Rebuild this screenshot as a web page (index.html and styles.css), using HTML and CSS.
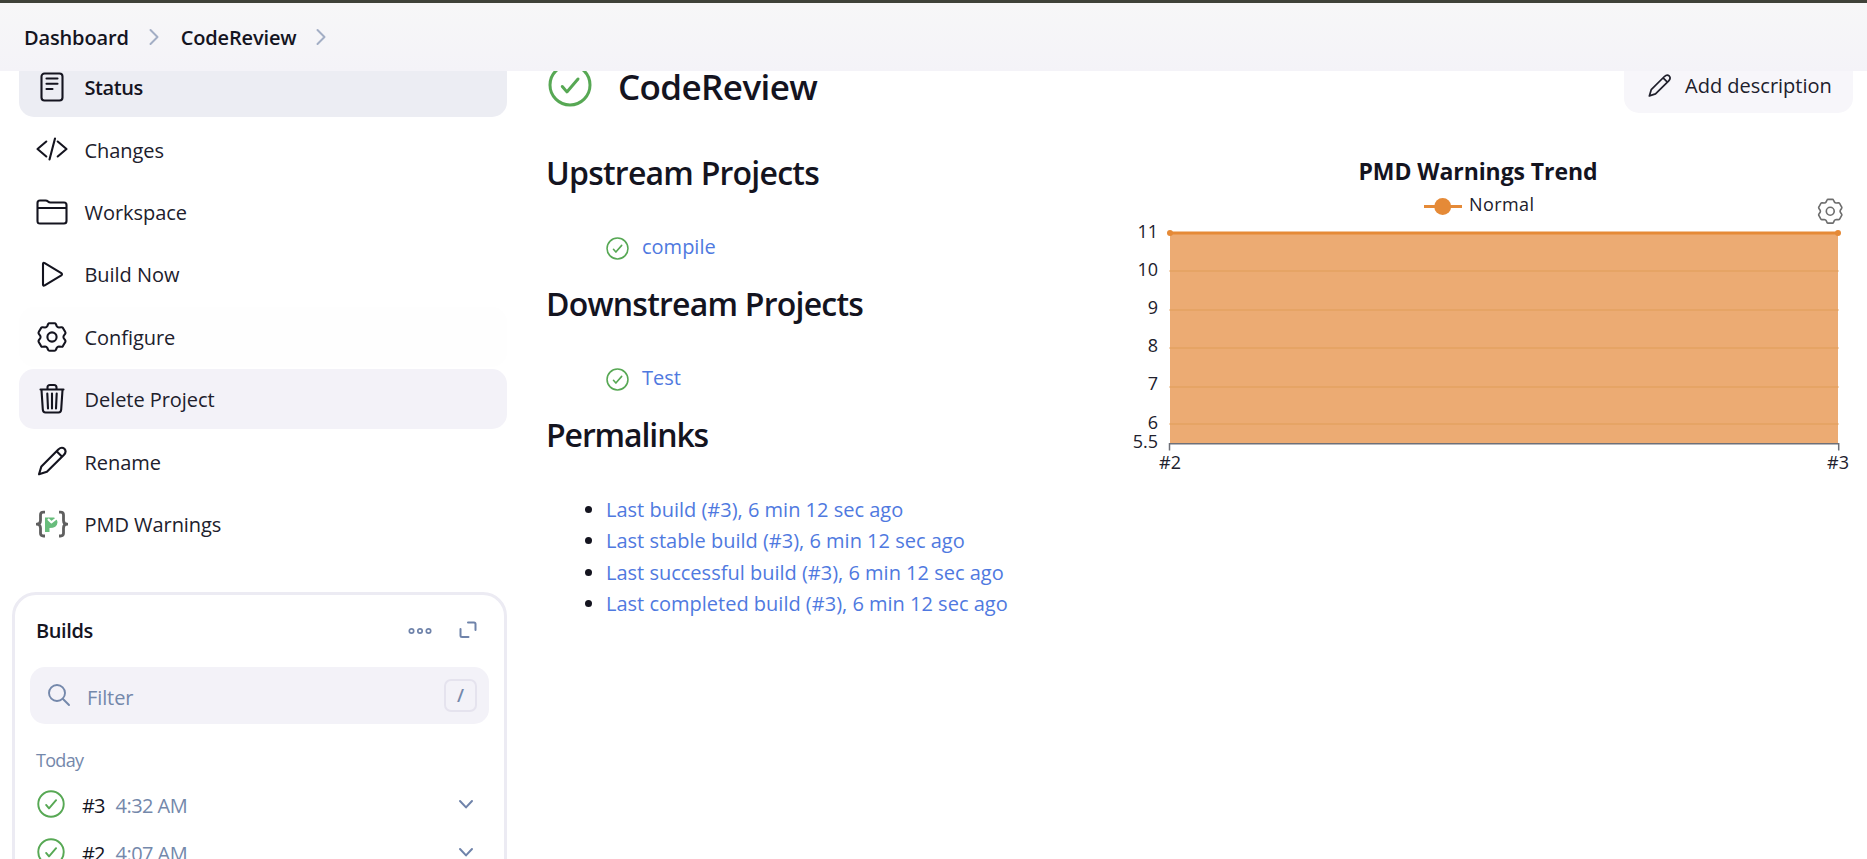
FILE: index.html
```html
<!DOCTYPE html>
<html lang="en">
<head>
<meta charset="utf-8">
<title>CodeReview</title>
<link rel="stylesheet" href="styles.css">
</head>
<body>
<svg class="defs" width="0" height="0">
  <symbol id="ok" viewBox="0 0 44 44"><circle cx="22" cy="22" r="20" stroke-width="3"/><path d="M14.3 23.5l4.6 5.4L30 16" stroke-width="3"/></symbol>
  <symbol id="gear" viewBox="-16 -16 32 32"><path d="M-4.8-10.8L-3.8-13Q-3.5-13.8-2.5-13.8H2.5Q3.5-13.8 3.8-13L4.8-10.8Q5.500-9.700 6.950-9.550L9.360-9.800Q10.400-9.900 10.900-9.100L13.300-4.900Q13.800-4.100 13.150-3.200L11.750-1.250Q11.100 0 11.750 1.250L13.150 3.200Q13.800 4.100 13.300 4.900L10.900 9.100Q10.400 9.900 9.360 9.800L6.950 9.550Q5.500 9.700 4.800 10.800L3.800 13Q3.500 13.800 2.500 13.800H-2.500Q-3.500 13.800-3.800 13L-4.800 10.800Q-5.500 9.700-6.950 9.550L-9.360 9.800Q-10.400 9.900-10.900 9.100L-13.300 4.900Q-13.800 4.100-13.150 3.200L-11.750 1.250Q-11.100 0-11.750-1.250L-13.150-3.200Q-13.800-4.100-13.300-4.900L-10.900-9.100Q-10.400-9.900-9.360-9.800L-6.950-9.550Q-5.500-9.700-4.800-10.800Z"/><circle r="4.600"/></symbol>
  <symbol id="pencil" viewBox="0 0 32 32"><path d="M3 29.3L5.4 21.4L22.3 4.5Q25.7 1.4 28.4 3.8Q31 6.7 27.8 10L10.9 26.8ZM20.6 6.2L26.1 11.7"/></symbol>
  <symbol id="chev" viewBox="0 0 16 16"><path d="M2 5l6 6.4L14 5"/></symbol>
</svg>

<header class="crumbs">
  <a>Dashboard</a>
  <svg class="sep" viewBox="0 0 10 18"><path d="M1.5 2l7 7-7 7"/></svg>
  <a class="crumb-last">CodeReview</a>
  <svg class="sep" viewBox="0 0 10 18"><path d="M1.5 2l7 7-7 7"/></svg>
</header>

<div class="page">
  <aside class="side">
    <nav class="tasks">
      <a class="task current"><svg class="ico" viewBox="0 0 32 32"><rect x="5.500" y="2.500" width="21" height="27" rx="3"/><path d="M10.500 7.500h11M10.500 12.800h11M10.500 18h6"/></svg><span>Status</span></a>
      <a class="task"><svg class="ico" viewBox="0 0 32 32"><path d="M10.300 8.500L1.500 16l8.800 7.500M21.700 8.500l8.800 7.500-8.800 7.500M19 5.500l-5.500 21"/></svg><span>Changes</span></a>
      <a class="task"><svg class="ico" viewBox="0 0 32 32"><path d="M1.500 25V7Q1.500 4.500 4 4.500H9.500Q11 4.500 12 5.500T14.500 6.500H28Q30.500 6.500 30.500 9V25Q30.500 27.500 28 27.500H4Q1.500 27.500 1.500 25ZM2 12H30"/></svg><span>Workspace</span></a>
      <a class="task"><svg class="ico" viewBox="0 0 32 32"><path d="M7 6V26.500Q7 28.200 8.700 27.400L25.300 17.400Q26.700 16.300 25.300 15.200L8.700 5.100Q7 4.300 7 6Z"/></svg><span>Build Now</span></a>
      <a class="task faint"><svg class="ico"><use href="#gear"/></svg><span>Configure</span></a>
      <a class="task hover"><svg class="ico" viewBox="0 0 32 32"><path d="M5.500 7l1.300 19.500Q7 29.500 9.500 29.500H22.500Q25 29.500 25.200 26.500L26.500 7M4.500 6.500H27.500M11.500 6V4.500Q11.500 2 14 2H18Q20.500 2 20.500 4.500V6M11.300 10.500l.7 15M16 10.500V25.500M20.700 10.500l-.7 15"/></svg><span>Delete Project</span></a>
      <a class="task"><svg class="ico"><use href="#pencil"/></svg><span>Rename</span></a>
      <a class="task"><svg class="ico pmd" viewBox="0 0 32 32"><path class="brace" d="M9 4.200H7.500Q4.500 4.200 4.500 7V12.500Q4.500 16.200.8 16.200Q4.500 16.200 4.500 20V25.300Q4.500 28 7.500 28H9M23 4.200H24.500Q27.500 4.200 27.500 7V12.500Q27.500 16.200 31.200 16.200Q27.500 16.200 27.500 20V25.300Q27.500 28 24.500 28H23"/><path class="flag" d="M9 9.500H18Q21.500 11.500 21.500 14.500Q21 20 13.500 20V24H9Z"/><path class="tick" d="M12 11l3.300 3.300L23.500 8"/></svg><span>PMD Warnings</span></a>
    </nav>

    <section class="builds">
      <div class="builds-head"><h2>Builds</h2>
        <svg class="dots" viewBox="0 0 24 8"><circle cx="3.500" cy="4" r="2.200"/><circle cx="12" cy="4" r="2.200"/><circle cx="20.500" cy="4" r="2.200"/></svg>
        <svg class="expand" viewBox="0 0 18 18"><path d="M9 1.500H15Q16.500 1.500 16.500 3V9M1.500 8V14.500Q1.500 16 3 16H9.500"/></svg>
      </div>
      <div class="filter"><svg class="search" viewBox="0 0 24 24"><circle cx="10" cy="10" r="8"/><path d="M16 16l6 6"/></svg><span>Filter</span><kbd>/</kbd></div>
      <h3>Today</h3>
      <div class="build"><svg class="ok"><use href="#ok"/></svg><b>#3</b><time>4:32 AM</time><svg class="chev"><use href="#chev"/></svg></div>
      <div class="build"><svg class="ok"><use href="#ok"/></svg><b>#2</b><time>4:07 AM</time><svg class="chev"><use href="#chev"/></svg></div>
    </section>
  </aside>

  <main class="main">
    <div class="title-row">
      <svg class="ok ok-lg"><use href="#ok"/></svg><h1>CodeReview</h1>
      <button class="add"><svg><use href="#pencil"/></svg><span>Add description</span></button>
    </div>
    <div class="cols">
      <div class="info">
        <h2 class="up">Upstream Projects</h2>
        <ul class="projects"><li><svg class="ok"><use href="#ok"/></svg><a>compile</a></li></ul>
        <h2 class="down">Downstream Projects</h2>
        <ul class="projects"><li><svg class="ok"><use href="#ok"/></svg><a>Test</a></li></ul>
        <h2 class="perm">Permalinks</h2>
        <ul class="links">
          <li><a>Last build (#3), 6 min 12 sec ago</a></li>
          <li><a>Last stable build (#3), 6 min 12 sec ago</a></li>
          <li><a>Last successful build (#3), 6 min 12 sec ago</a></li>
          <li><a>Last completed build (#3), 6 min 12 sec ago</a></li>
        </ul>
      </div>
      <svg class="chart" width="747" height="340" viewBox="1120 140 747 340">
        <text class="chart-title" x="1358.500" y="180" textLength="239">PMD Warnings Trend</text>
        <path class="series" d="M1424 206.500H1462"/><circle class="dot" cx="1442.700" cy="206.500" r="8.500"/>
        <text x="1469" y="211" textLength="65">Normal</text>
        <rect class="area" x="1170" y="233" width="668" height="210.500"/>
        <path class="grid" d="M1170 271H1838M1170 310H1838M1170 348H1838M1170 387H1838M1170 424H1838"/>
        <path class="series" d="M1170 233H1838"/>
        <circle class="dot" cx="1170" cy="233" r="3"/><circle class="dot" cx="1838" cy="233" r="3"/>
        <path class="axis" d="M1169.500 450.500V443.700H1838.700V450.500"/>
        <g class="ylab">
          <text x="1158" y="238">11</text><text x="1158" y="276">10</text><text x="1158" y="314">9</text><text x="1158" y="352">8</text><text x="1158" y="390">7</text><text x="1158" y="429">6</text><text x="1158" y="448">5.5</text>
        </g>
        <g class="xlab"><text x="1170" y="469">#2</text><text x="1838" y="469">#3</text></g>
        <use class="chart-gear" href="#gear" x="1816.500" y="197.500" width="27.500" height="27.500"/>
      </svg>
    </div>
  </main>
</div>
</body>
</html>
```
FILE: styles.css
```css
* { box-sizing: border-box; }
html, body { height: 100%; overflow: hidden; }
body { margin: 0; font: 20px/31.5px "Open Sans", "Noto Sans", sans-serif; color: #14141f; background: #fff; }
h1, h2, h3, ul { margin: 0; padding: 0; }
svg { fill: none; stroke: currentColor; stroke-linecap: round; stroke-linejoin: round; flex: none; display: block; }
.defs { position: absolute; }
a { color: inherit; }

.crumbs { position: relative; z-index: 2; height: 71px; padding: 2px 0 0 24px; border-top: 3px solid #3f4239; background: linear-gradient(#f7f7f8, #f4f3f8); display: flex; align-items: center; font-weight: 600; font-size: 20px; letter-spacing: -.15px; }
.sep { width: 10px; height: 18px; margin: -2px 22px 0 20px; stroke: #a3aec5; stroke-width: 2; }

.page { display: grid; grid-template-columns: 546px 1fr; margin-top: -14px; height: calc(100vh - 57px); overflow: hidden; }
.tasks { padding-left: 19px; width: 507px; display: flex; flex-direction: column; gap: 2.400px; }
.task { height: 60px; padding-left: 17px; border-radius: 15px; display: flex; align-items: center; gap: 16.500px; color: #20202c; letter-spacing: -.05px; }
.task span { padding-top: 2px; }
.task.current { background: #ecedf3; font-weight: 600; color: #14141f; letter-spacing: -.4px; }
.task.current span { padding-top: 1px; }
.task.hover { background: #f3f2f8; }
.task.faint { background: #fefefe; }
.ico { width: 32px; height: 32px; stroke: #14141f; stroke-width: 2.100; }
.pmd .brace { stroke: #5f5f5f; stroke-width: 2.800; stroke-linecap: butt; }
.pmd .flag { fill: #68bd7c; stroke: none; }
.pmd .tick { stroke: #fff; stroke-width: 2.200; stroke-linecap: butt; }

.builds { margin: 38px 0 0 12px; width: 495px; height: 330px; border: 3px solid #ecebf3; border-radius: 24px; padding: 0 15px; }
.builds-head { height: 72px; padding: 0 12px 0 6px; display: flex; align-items: center; color: #6f83aa; }
.builds h2 { font-size: 20px; font-weight: 600; letter-spacing: -.4px; color: #14141f; margin-right: auto; }
.dots { width: 24px; height: 8px; stroke-width: 1.700; margin-right: 27px; }
.expand { width: 18px; height: 18px; stroke-width: 2; margin-top: -1px; }
.filter { height: 57px; border-radius: 15px; background: #f3f2f8; color: #7488ab; display: flex; align-items: center; padding: 0 12px 0 17px; }
.search { width: 24px; height: 24px; stroke-width: 1.900; margin-right: 16px; }
.filter span { padding-top: 5px; letter-spacing: -.1px; }
kbd { margin-left: auto; width: 33px; height: 33px; border: 2px solid #e5e3ee; border-radius: 7px; font: 600 18px/29px "Open Sans", sans-serif; text-align: center; }
.builds h3 { margin: 21px 0 5px 6px; font-size: 18px; font-weight: 400; line-height: 30px; color: #7488ab; letter-spacing: -.7px; }
.build { height: 48px; display: flex; align-items: center; padding: 0 15px 0 7px; }
.build b { font-weight: 400; margin: 4px 11px 0 17px; letter-spacing: -.9px; }
.build time { color: #7488ab; margin: 4px auto 0 0; letter-spacing: -.55px; }
.ok { stroke: #57a854; width: 28px; height: 28px; }
.chev { width: 16px; height: 16px; color: #6f83aa; stroke-width: 2; }

.main { padding-right: 14px; margin-top: -1px; }
.title-row { height: 57px; display: flex; align-items: center; }
.ok-lg { width: 44px; height: 44px; margin-left: 2px; }
h1 { margin: 4px auto 0 26px; font-size: 35px; line-height: 44px; font-weight: 600; letter-spacing: -.6px; }
.add { width: 229px; height: 57px; border: 0; border-radius: 15px; background: #f7f6fa; color: #20202c; font: inherit; display: flex; align-items: center; gap: 13px; padding: 1px 0 0 23px; }
.add span { padding-top: 1px; }
.add svg { width: 25px; height: 25px; stroke-width: 2.200; }
.cols { display: grid; grid-template-columns: 574px 747px; padding-top: 27px; margin-right: -14px; }
.info h2 { font-size: 32px; font-weight: 600; line-height: 46px; letter-spacing: -.77px; }
.info .perm { letter-spacing: -1.1px; }
.up { margin-top: 10px; }
.down, .perm { margin-top: 18.500px; }
.projects { list-style: none; padding: 35px 0 0 60px; }
.projects li { display: flex; align-items: center; gap: 13px; }
.projects .ok { width: 23px; height: 23px; margin-top: 3px; }
.info a { color: #4f79e0; }
.links { padding: 36px 0 0 60px; line-height: 31.400px; }

.chart { font-size: 18px; }
.chart text { fill: #20202c; stroke: none; }
.chart .chart-title { font-size: 23px; font-weight: 700; fill: #14141f; }
.series { stroke: #e58a37; stroke-width: 3; stroke-linecap: butt; }
.dot { fill: #e58a37; stroke: none; }
.area { fill: #ecab73; stroke: none; }
.grid { stroke: #e4a261; stroke-width: 1.500; }
.axis { stroke: #6e7079; stroke-width: 1.500; stroke-linecap: butt; stroke-linejoin: miter; }
.ylab { text-anchor: end; }
.xlab { text-anchor: middle; }
.chart-gear { stroke: #6e6e6e; stroke-width: 1.900; }
```
